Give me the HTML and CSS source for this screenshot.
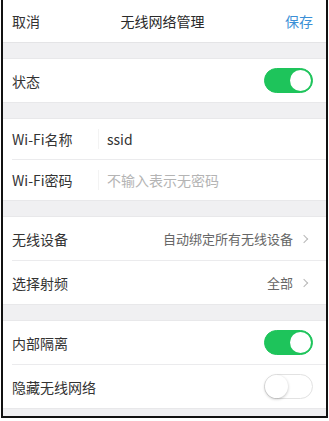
FILE: index.html
```html
<!DOCTYPE html>
<html lang="zh-CN">
<head>
    <meta charset="UTF-8">
    <meta name="viewport" content="width=device-width, initial-scale=1.0">
    <title>无线网络管理</title>
    <link rel="stylesheet" href="styles.css">
</head>
<body>
    <div class="frame">
        <div class="header">
            <span class="header-btn">取消</span>
            <span class="header-title">无线网络管理</span>
            <span class="header-btn save">保存</span>
        </div>

        <div class="group">
            <div class="row">
                <span class="label">状态</span>
                <span class="switch on"><span class="knob"></span></span>
            </div>
        </div>

        <div class="group">
            <div class="row input-row">
                <span class="label fixed">Wi-Fi名称</span>
                <input type="text" class="field" value="ssid">
            </div>
            <div class="row input-row">
                <span class="label fixed">Wi-Fi密码</span>
                <input type="password" class="field" placeholder="不输入表示无密码">
            </div>
        </div>

        <div class="group">
            <div class="row">
                <span class="label">无线设备</span>
                <span class="value">自动绑定所有无线设备<span class="arrow"></span></span>
            </div>
            <div class="row">
                <span class="label">选择射频</span>
                <span class="value">全部<span class="arrow"></span></span>
            </div>
        </div>

        <div class="group">
            <div class="row">
                <span class="label">内部隔离</span>
                <span class="switch on"><span class="knob"></span></span>
            </div>
            <div class="row">
                <span class="label">隐藏无线网络</span>
                <span class="switch"><span class="knob"></span></span>
            </div>
        </div>
    </div>
</body>
</html>
```

FILE: styles.css
```css
html, body {
    margin: 0;
    padding: 0;
    background: #fff;
}
body {
    font-family: "Noto Sans CJK SC", "Noto Sans", sans-serif;
    font-size: 14px;
    color: #333;
}
.frame {
    width: 323px;
    height: 416px;
    margin-left: 1px;
    border-left: 2px solid #111;
    border-right: 2px solid #111;
    border-bottom: 2px solid #111;
    background: #f0f0f2;
    overflow: hidden;
}
.header {
    height: 42px;
    background: #fff;
    border-bottom: 1px solid #e4e4e6;
    display: flex;
    align-items: center;
    justify-content: space-between;
    padding: 0 13px 0 9px;
}
.header-title {
    font-size: 14px;
    color: #2a2a2a;
}
.header-btn {
    color: #333;
}
.header-btn.save {
    color: #3b8fd6;
}
.group {
    margin-top: 15px;
    background: #fff;
    border-top: 1px solid #e8e8ea;
    border-bottom: 1px solid #e8e8ea;
    padding-left: 9px;
}
.row {
    height: 43px;
    display: flex;
    align-items: center;
    justify-content: space-between;
    padding-right: 13px;
    border-top: 1px solid #ebebed;
}
.row:first-child {
    border-top: none;
}
.input-row {
    height: 40px;
    justify-content: flex-start;
}
.label {
    color: #333;
}
.label.fixed {
    width: 86px;
    border-right: 1px solid #f3f3f3;
    margin-right: 8px;
}
.field {
    flex: 1;
    border: none;
    outline: none;
    padding: 0;
    font: inherit;
    color: #333;
    background: transparent;
}
.field::placeholder {
    color: #b4b4b4;
}
.value {
    color: #666;
    font-size: 13px;
    display: flex;
    align-items: center;
}
.arrow {
    width: 5px;
    height: 5px;
    border-top: 1px solid #b8b8b8;
    border-right: 1px solid #b8b8b8;
    transform: rotate(45deg);
    margin-left: 8px;
    margin-right: 6px;
}
.switch {
    position: relative;
    width: 47px;
    height: 23px;
    border-radius: 13px;
    border: 1px solid #e2e2e2;
    background: #fff;
}
.switch .knob {
    position: absolute;
    top: 0;
    left: 0;
    width: 23px;
    height: 23px;
    border-radius: 50%;
    background: #fff;
    box-shadow: 0 1px 3px rgba(0, 0, 0, 0.25);
}
.switch.on {
    background: #1ec45b;
    border-color: #1ec45b;
}
.switch.on .knob {
    left: auto;
    right: 1px;
    top: 1px;
    width: 21px;
    height: 21px;
    box-shadow: none;
}
```
